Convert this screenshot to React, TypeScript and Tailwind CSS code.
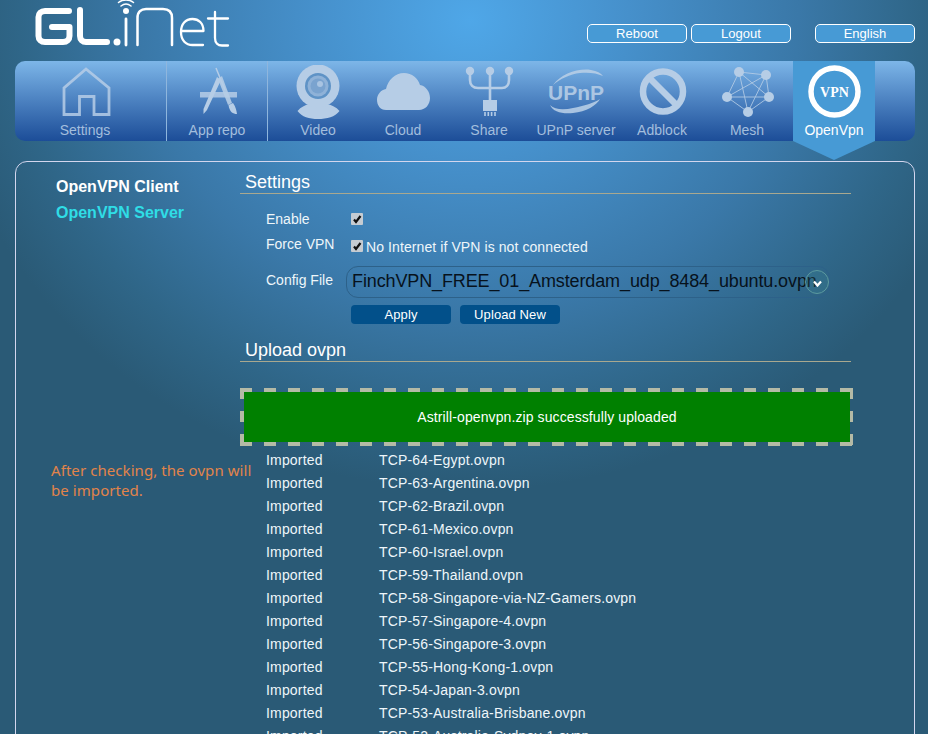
const files = [
  "TCP-64-Egypt.ovpn",
  "TCP-63-Argentina.ovpn",
  "TCP-62-Brazil.ovpn",
  "TCP-61-Mexico.ovpn",
  "TCP-60-Israel.ovpn",
  "TCP-59-Thailand.ovpn",
  "TCP-58-Singapore-via-NZ-Gamers.ovpn",
  "TCP-57-Singapore-4.ovpn",
  "TCP-56-Singapore-3.ovpn",
  "TCP-55-Hong-Kong-1.ovpn",
  "TCP-54-Japan-3.ovpn",
  "TCP-53-Australia-Brisbane.ovpn",
  "TCP-52-Australia-Sydney-1.ovpn",
];

const ICON = "#b6cde6";

// icons are drawn in page coordinates, the viewBox is a 60x54 window round the item's centre
const NavIcon = ({ cx, children }: { cx: number; children: React.ReactNode }) => (
  <svg width="60" height="54" viewBox={`${cx - 30} 65 60 54`} className="shrink-0">
    {children}
  </svg>
);

const Logo = () => (
  <svg width="210" height="50" viewBox="30 0 210 50" role="img" aria-label="GL.iNet" fill="none" stroke="#fff" strokeLinecap="round" strokeLinejoin="round">
    <path d="M69 11H45C41 11 38.500 13.500 38.500 17V36C38.500 39.500 41 42 45 42H63C67 42 69.500 39.500 69.500 36V27H52" strokeWidth="6" />
    <path d="M80 10V36C80 39.500 82.500 42 86 42H107" strokeWidth="6" />
    <circle cx="117" cy="42" r="3.500" fill="#fff" stroke="none" />
    <path d="M126 19V45" strokeWidth="2.800" />
    <circle cx="126" cy="11" r="3" fill="#fff" stroke="none" />
    <path d="M121 6C124 3.500 128 3.500 131 6M118.500 2.500C123 -1 129 -1 133.500 2.500" strokeWidth="1.500" />
    <path d="M137.500 45V18C137.500 12 141 9 146 9H163C168.500 9 172 12 172 18V45" strokeWidth="2.500" />
    <path d="M181 31H203.500C203.500 23 198.500 19 192.500 19C185.500 19 181 24 181 32C181 40.500 186 45 192.500 45H203" strokeWidth="2.300" />
    <path d="M215 12V38C215 43 218 45.500 222 45.500H228M208 18.500H228" strokeWidth="2.300" />
  </svg>
);

const HomeIcon = () => (
  <NavIcon cx={85}>
    <path d="M64 114.500V88L86 69L109 88V114.500H94V96.500H79.500V114.500Z" fill="none" stroke={ICON} strokeWidth="2.800" strokeLinejoin="miter" opacity="0.85" />
  </NavIcon>
);

const AppIcon = () => (
  <NavIcon cx={216}>
    <rect x="199" y="92" width="37" height="5.500" fill={ICON} opacity="0.85" />
    <path d="M216 77L220 80L206 110L202.500 114L202.500 109Z" fill={ICON} />
    <path d="M215 68L224 90" stroke={ICON} strokeWidth="1.500" />
    <path d="M217 79L221 76L231 103L227 105Z" fill={ICON} opacity="0.9" />
    <path d="M227.500 105L232 103C235 107 235.500 111 236 114C232 114 228.500 112 227.500 105Z" fill={ICON} />
  </NavIcon>
);

const VideoIcon = () => (
  <NavIcon cx={318}>
    <path d="M297.500 111C301 107 305 105 309 104C315 107 321 107 327 104C332 105 336 107 339.500 111C335 117 327 119 318 119C309 119 302 117 297.500 111Z" fill={ICON} />
    <circle cx="318" cy="86" r="21.500" fill={ICON} />
    <circle cx="318" cy="86" r="13" fill="#5f93c6" />
    <circle cx="318" cy="86" r="10.500" fill="#8fb2d8" />
    <circle cx="318" cy="86" r="7.500" fill="#7aa3cf" />
    <circle cx="320" cy="84" r="3" fill="#a9c4e2" />
  </NavIcon>
);

const CloudIcon = () => (
  <NavIcon cx={403}>
    <path d="M386 110C380 110 377 105 377 100C377 94 381 90 386 89C388 80 395 73 404 73C412 73 418 78 420 85C426 86 430 92 430 98C430 105 425 110 419 110Z" fill={ICON} />
  </NavIcon>
);

const ShareIcon = () => (
  <NavIcon cx={489}>
    <g fill="none" stroke={ICON} strokeWidth="2.600">
      <path d="M490 72V101" />
      <path d="M470 72V80C470 85 473 88 478 88H502C506 88 509 85 509 80V72" />
    </g>
    <circle cx="470" cy="71" r="4.200" fill={ICON} />
    <circle cx="490" cy="71" r="4.200" fill={ICON} />
    <circle cx="509" cy="71" r="4.200" fill={ICON} />
    <rect x="483" y="100" width="14" height="11" fill={ICON} />
    <path d="M485 112V116M488.300 112V116M491.600 112V116M495 112V116" stroke={ICON} strokeWidth="1.600" />
  </NavIcon>
);

const UpnpIcon = () => (
  <NavIcon cx={576}>
    <text x="576" y="100" textAnchor="middle" fontFamily="'Liberation Sans', sans-serif" fontWeight="700" fontSize="21" fill={ICON} opacity="0.9">
      UPnP
    </text>
    <path d="M553 85C561 74 578 68 591 70C597 71 601 73 603 76C597 73 588 72 580 73C570 74 560 79 553 85Z" fill={ICON} opacity="0.9" />
    <path d="M550 105C555 110 564 110 573 108C584 106 594 103 600 99C597 105 586 112 573 113C562 114 553 112 550 105Z" fill={ICON} opacity="0.9" />
  </NavIcon>
);

const BlockIcon = () => (
  <NavIcon cx={662}>
    <circle cx="663" cy="91.500" r="20" fill="none" stroke={ICON} strokeWidth="6.500" />
    <path d="M649 77.500L677 105.500" stroke={ICON} strokeWidth="6.500" />
  </NavIcon>
);

const MESH = [
  [739, 72],
  [766, 75],
  [769, 97],
  [748, 112],
  [727, 97],
];

const MeshIcon = () => (
  <NavIcon cx={747}>
    <g stroke={ICON} strokeWidth="1" opacity="0.85">
      {MESH.map((a, i) =>
        MESH.slice(i + 1).map((b, j) => <line key={`${i}-${j}`} x1={a[0]} y1={a[1]} x2={b[0]} y2={b[1]} />),
      )}
    </g>
    {MESH.map((p, i) => (
      <circle key={i} cx={p[0]} cy={p[1]} r="5" fill={ICON} />
    ))}
  </NavIcon>
);

const VpnIcon = () => (
  <NavIcon cx={834}>
    <circle cx="834.500" cy="91.500" r="23.500" fill="none" stroke="#fff" strokeWidth="5.500" />
    <text x="834.500" y="96.500" textAnchor="middle" fontFamily="'Liberation Serif', serif" fontWeight="700" fontSize="14" fill="#fff">
      VPN
    </text>
  </NavIcon>
);

const items = [
  { label: "Settings", icon: <HomeIcon />, cls: "w-[152px] pr-[11px] border-r border-[#8fb6dd]" },
  { label: "App repo", icon: <AppIcon />, cls: "w-[101px] border-r border-[#8fb6dd]" },
  { label: "Video", icon: <VideoIcon />, cls: "w-[86px] ml-[7px]" },
  { label: "Cloud", icon: <CloudIcon />, cls: "w-[84px]" },
  { label: "Share", icon: <ShareIcon />, cls: "w-[88px]" },
  { label: "UPnP server", icon: <UpnpIcon />, cls: "w-[86px]" },
  { label: "Adblock", icon: <BlockIcon />, cls: "w-[86px]" },
  { label: "Mesh", icon: <MeshIcon />, cls: "w-[84px]" },
];

const TopButton = ({ label, cls }: { label: string; cls?: string }) => (
  <button className={`h-[19px] w-[100px] rounded-[5px] border border-white bg-[#479ad5] text-[13px] leading-[17px] text-white ${cls ?? ""}`}>
    {label}
  </button>
);

const Tick = ({ cls }: { cls?: string }) => (
  <span className={`flex h-[12px] w-[12px] shrink-0 items-center justify-center rounded-[1px] bg-[#c6ccd2] ${cls ?? ""}`}>
    <svg width="10" height="10" viewBox="0 0 10 10">
      <path d="M2 5.500L4 8L8.500 2" fill="none" stroke="#111" strokeWidth="2.200" />
    </svg>
  </span>
);

const Heading = ({ title, cls }: { title: string; cls?: string }) => (
  <h2 className={`h-[22px] border-b border-[#a9a88f] pl-[5px] text-[18px] leading-[21px] text-white ${cls ?? ""}`}>{title}</h2>
);

export default function App() {
  return (
    <div className="h-screen overflow-hidden bg-[#2a5a76] bg-[radial-gradient(ellipse_530px_470px_at_470px_20px,#4fa7e8_0%,#4690cb_30%,#3a78a8_62%,#2f6688_85%,#2a5a76_100%)] font-['Liberation_Sans',Arial,sans-serif] text-[14px] text-[#eef6fa]">
      <header className="flex h-[61px] pl-[30px] pr-[13px]">
        <Logo />
        <div className="ml-auto flex pt-[24px]">
          <TopButton label="Reboot" />
          <TopButton label="Logout" cls="ml-[4px]" />
          <TopButton label="English" cls="ml-[24px]" />
        </div>
      </header>

      <nav className="ml-[15px] flex h-[80px] w-[900px] rounded-[10px] bg-gradient-to-b from-[#7db6e8] to-[#1c4d98]">
        {items.map((it) => (
          <div key={it.label} className={`flex h-full flex-col items-center pt-[4px] ${it.cls}`}>
            {it.icon}
            <span className="mt-px whitespace-nowrap leading-5 text-[#a3bedd]">{it.label}</span>
          </div>
        ))}
        <div className="relative ml-[4px] flex h-[99px] w-[82px] flex-col items-center bg-[#479ad5] pt-[4px] [clip-path:polygon(0_0,100%_0,100%_80px,50%_99px,0_80px)]">
          <VpnIcon />
          <span className="mt-px leading-5 text-white">OpenVpn</span>
        </div>
      </nav>

      <main className="ml-[15px] mt-[20px] flex w-[900px] rounded-t-[12px] border border-[#d3d6ee] pb-10">
        <aside className="w-[224px] shrink-0 pl-[35px] pt-[13px]">
          <div className="ml-[5px] text-[16px] font-bold leading-6 text-white">OpenVPN Client</div>
          <div className="ml-[5px] mt-[2px] text-[16px] font-bold leading-6 text-[#2fdde6]">OpenVPN Server</div>
          <p className="mt-[235px] whitespace-nowrap font-['Noto_Sans',sans-serif] text-[15px] leading-[20px] tracking-[0.07px] text-[#e2844a]">
            After checking, the ovpn will
            <br />
            be imported.
          </p>
        </aside>

        <section className="w-[611px] pt-[10px]">
          <Heading title="Settings" />

          <div className="mt-[15px] flex h-[20px] items-center pl-[26px]">
            <span className="w-[85px]">Enable</span>
            <Tick />
          </div>
          <div className="mt-[6px] flex h-[20px] items-center pl-[26px]">
            <span className="w-[85px] -mt-[2px]">Force VPN</span>
            <Tick cls="mt-px" />
            <span className="ml-[3px] mt-[4px] tracking-[0.09px]">No Internet if VPN is not connected</span>
          </div>
          <div className="mt-[11px] flex h-[32px] items-center pl-[26px]">
            <span className="-mt-[4px] w-[80px]">Config File</span>
            <div className="relative flex h-[32px] w-[484px] items-center whitespace-nowrap rounded-[12px] border border-[#2d6189] pb-[2px] pl-[5px] text-[18px] tracking-[-0.12px] text-[#07121c]">
              FinchVPN_FREE_01_Amsterdam_udp_8484_ubuntu.ovpn
              <span className="absolute left-[458px] top-[3px] flex h-[24px] w-[24px] items-center justify-center rounded-full border border-[#5c9a9f] bg-[#3f8f96]/20">
                <svg width="9" height="7" viewBox="0 0 9 7" className="mt-[2px]">
                  <path d="M1 1.500L4.500 5.500L8 1.500" fill="none" stroke="#fff" strokeWidth="2.200" />
                </svg>
              </span>
            </div>
          </div>
          <div className="ml-[111px] mt-[7px] flex gap-[9px]">
            <button className="h-[19px] w-[100px] rounded-[4px] bg-[#02508a] text-[13px] leading-[19px] tracking-[0.1px] text-white">Apply</button>
            <button className="h-[19px] w-[100px] rounded-[4px] bg-[#02508a] text-[13px] leading-[19px] tracking-[0.1px] text-white">Upload New</button>
          </div>

          <Heading title="Upload ovpn" cls="mt-[16px]" />

          <div className="mt-[26px] h-[58px] w-[613px] p-[4px] [background:repeating-linear-gradient(90deg,#b4baa6_0_12px,transparent_12px_24px)_0_0/100%_4px_no-repeat,repeating-linear-gradient(90deg,#b4baa6_0_12px,transparent_12px_24px)_0_100%/100%_4px_no-repeat,repeating-linear-gradient(180deg,#b4baa6_0_11px,transparent_11px_23px)_0_0/4px_100%_no-repeat,repeating-linear-gradient(180deg,#b4baa6_0_11px,transparent_11px_23px)_100%_0/4px_100%_no-repeat]">
            <div className="flex h-full w-[606px] items-center justify-center bg-[#008000] tracking-[0.1px] text-white">Astrill-openvpn.zip successfully uploaded</div>
          </div>

          <ul className="mt-[3px] pl-[26px] tracking-[0.17px]">
            {files.map((f) => (
              <li key={f} className="flex h-[23px] items-center">
                <span className="w-[113px]">Imported</span>
                <span>{f}</span>
              </li>
            ))}
          </ul>
        </section>
      </main>
    </div>
  );
}
